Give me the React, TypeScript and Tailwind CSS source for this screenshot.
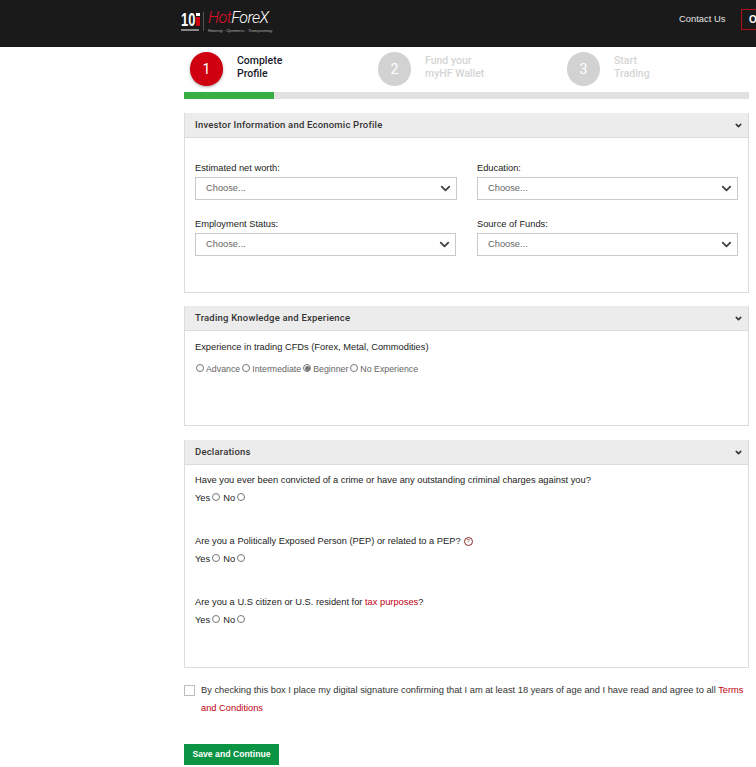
import { ChevronDown } from "lucide-react";

const Step = ({ n, top, bottom, active, className }: { n: number; top: string; bottom: string; active?: boolean; className: string }) => (
  <div className={`flex items-start ${className}`}>
    <div
      className={`w-[33px] h-[34px] rounded-full flex items-center justify-center text-[14px] text-white shrink-0 font-['Roboto',sans-serif] ${
        active ? "bg-[#cf0010] shadow-[0_1px_3px_rgba(0,0,0,0.35)]" : "bg-[#d2d2d2]"
      }`}
    >
      {n}
    </div>
    <div
      className={`ml-[14px] mt-[2px] text-[10.5px] leading-[13px] font-medium font-['Roboto',sans-serif] ${
        active ? "text-[#1a1a2a]" : "text-[#d5d5d5]"
      }`}
    >
      {top}
      <br />
      {bottom}
    </div>
  </div>
);

const Field = ({ label, width }: { label: string; width: string }) => (
  <div className={width}>
    <div className="text-[9.3px] leading-[12px] text-[#222] mb-[3px]">{label}</div>
    <div className="relative h-[23px] border border-[#c9c9c9] flex items-center pl-[10px] text-[9.3px] text-[#666]">
      Choose...
      <ChevronDown className="absolute right-[3px] top-[3px] w-[15px] h-[15px] text-[#444]" strokeWidth={3} />
    </div>
  </div>
);

const Card = ({ title, height, children }: { title: string; height: string; children: React.ReactNode }) => (
  <section className={`border border-[#dcdcdc] ${height}`}>
    <div className="h-[24px] bg-[#ececec] border-b border-[#dcdcdc] flex items-center justify-between pl-[10px] pr-[5px] box-content -mt-px">
      <span className="text-[9.5px] font-medium text-[#333] tracking-[0.2px] font-['Roboto',sans-serif]">{title}</span>
      <ChevronDown className="w-[9px] h-[9px] text-[#333]" strokeWidth={4} />
    </div>
    {children}
  </section>
);

const Radio = ({ checked }: { checked?: boolean }) => (
  <span className="inline-flex w-[8px] h-[8px] rounded-full border border-[#767676] items-center justify-center bg-white mb-[2px]">
    {checked && <span className="w-[5px] h-[5px] rounded-full bg-[#777]" />}
  </span>
);

const YesNo = () => (
  <div className="text-[9.3px] leading-[12px] text-[#222] flex items-center gap-[2px] mt-[6px]">
    Yes <Radio /> <span className="ml-[1px]">No</span> <Radio />
  </div>
);

export default function App() {
  return (
    <div className="w-[756px] h-[767px] overflow-hidden bg-white font-['Liberation_Sans',Arial,sans-serif]">
      <header className="h-[47px] bg-[#1a1a1a] pl-[181px] flex items-center relative">
        <div className="flex items-center mb-[4px]">
          <div className="flex flex-col items-start w-[19px]">
            <span className="flex items-center">
              <span className="w-[14px] text-[19px] leading-[15px] font-bold text-white inline-block origin-left scale-x-[0.68]">10</span>
              <span className="w-[4px] h-[13px] ml-px flex flex-col gap-px">
                <span className="h-[3px] bg-white" />
                <span className="h-[9px] bg-[#cf0010]" />
              </span>
            </span>
            <span className="w-[18px] h-[2px] bg-[#888] mt-[2px]" />
          </div>
          <span className="w-px h-[19px] bg-[#555] ml-[3px] mr-[4px]" />
          <div className="flex flex-col">
            <span className="text-[16px] leading-[14px] italic font-light tracking-[-0.5px] font-['Roboto',sans-serif]">
              <span className="text-[#e0102a]">Hot</span>
              <span className="text-white">ForeX</span>
            </span>
            <span className="mt-[3px] text-[4px] leading-[5px] text-[#bbb] italic">Honesty · Openness · Transparency</span>
          </div>
        </div>
        <span className="absolute left-[679px] top-[12px] text-[9.4px] text-[#e5e5e5]">Contact Us</span>
        <div className="absolute left-[741px] top-[9px] w-[30px] h-[21px] border border-[#b0101a] pl-[7px] flex items-center text-[10px] font-bold text-white">
          O
        </div>
      </header>

      <main className="w-[565px] ml-[184px]">
        <div className="flex pt-[5px] pl-[6px] h-[45px]">
          <Step n={1} top="Complete" bottom="Profile" active className="w-[188px]" />
          <Step n={2} top="Fund your" bottom="myHF Wallet" className="w-[189px]" />
          <Step n={3} top="Start" bottom="Trading" className="w-[150px]" />
        </div>
        <div className="h-[7px] bg-[#e1e1e1]">
          <div className="w-[90px] h-full bg-[#39ae43]" />
        </div>

        <div className="mt-[14px] flex flex-col gap-[13px]">
          <Card title="Investor Information and Economic Profile" height="h-[180px]">
            <div className="pt-[24px] pl-[10px] pr-[10px] grid grid-cols-[261px_261px] gap-x-[21px] gap-y-[18px]">
              <Field label="Estimated net worth:" width="w-[262px]" />
              <Field label="Education:" width="w-[261px]" />
              <Field label="Employment Status:" width="w-[261px]" />
              <Field label="Source of Funds:" width="w-[261px]" />
            </div>
          </Card>

          <Card title="Trading Knowledge and Experience" height="h-[120px]">
            <div className="pt-[10px] pl-[10px] text-[9.3px] leading-[12px] text-[#222]">
              <div>Experience in trading CFDs (Forex, Metal, Commodities)</div>
              <div className="mt-[10px] flex items-center gap-[2px] text-[8.8px] text-[#666] pl-px">
                <Radio />
                <span>Advance</span>
                <Radio />
                <span>Intermediate</span>
                <Radio checked />
                <span>Beginner</span>
                <Radio />
                <span>No Experience</span>
              </div>
            </div>
          </Card>

          <Card title="Declarations" height="h-[228px] mt-px">
            <div className="pt-[9px] pl-[10px] text-[9.3px] leading-[12px] text-[#222]">
              <div>Have you ever been convicted of a crime or have any outstanding criminal charges against you?</div>
              <YesNo />
              <div className="mt-[31px] flex items-center gap-[3px]">
                Are you a Politically Exposed Person (PEP) or related to a PEP?
                <span className="w-[9px] h-[9px] rounded-full border border-[#8a2a2a] text-[6px] leading-[7px] text-center text-[#8a2a2a]">?</span>
              </div>
              <YesNo />
              <div className="mt-[31px]">
                Are you a U.S citizen or U.S. resident for <span className="text-[#c00010]">tax purposes</span>?
              </div>
              <YesNo />
            </div>
          </Card>
        </div>

        <div className="mt-[13px] flex text-[9.3px] leading-[18px] text-[#333]">
          <span className="w-[11px] h-[11px] border border-[#bdbdbd] mt-[4px] shrink-0" />
          <p className="ml-[6px]">
            By checking this box I place my digital signature confirming that I am at least 18 years of age and I have read and agree to all{" "}
            <span className="text-[#c00010]">Terms</span>
            <br />
            <span className="text-[#c00010]">and Conditions</span>
          </p>
        </div>

        <button className="mt-[27px] block w-[95px] h-[21px] bg-[#0b9444] text-white text-[8.7px] font-bold">
          Save and Continue
        </button>
      </main>
    </div>
  );
}
